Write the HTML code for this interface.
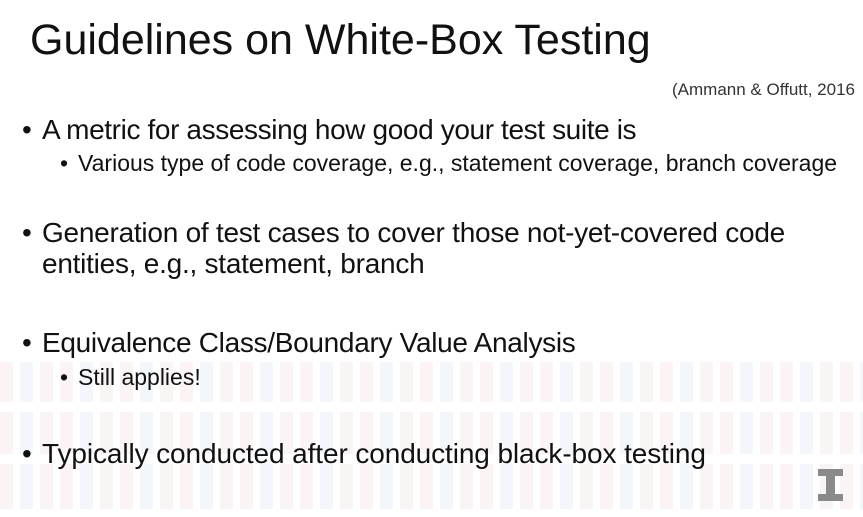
<!DOCTYPE html>
<html><head><style>
body{margin:0;width:863px;height:517px;overflow:hidden;background:#fff;font-family:"Liberation Sans",sans-serif;color:#111;position:relative}
.bg{position:absolute;left:0;width:863px;background:repeating-linear-gradient(90deg,#fcf4f4 0 13px,#fff 13px 20px,#f3f7fc 20px 33px,#fff 33px 40px,#faf5f5 40px 53px,#fff 53px 60px)}
.t{position:absolute;white-space:nowrap}
.L{font-size:28px}
.S{font-size:23px}
</style></head><body>
<div class="bg" style="top:362px;height:40px"></div>
<div class="bg" style="top:412px;height:42px"></div>
<div class="bg" style="top:464px;height:45px"></div>
<div class="t" style="left:30px;top:16px;font-size:43px">Guidelines on White-Box Testing</div>
<div class="t" style="left:672px;top:80px;font-size:17px;color:#333">(Ammann &amp; Offutt, 2016</div>
<div class="t L" style="left:22px;top:114px">•</div><div class="t L" style="left:42px;top:114px;letter-spacing:-0.38px">A metric for assessing how good your test suite is</div>
<div class="t S" style="left:60px;top:150px">•</div><div class="t S" style="left:78px;top:150px">Various type of code coverage, e.g., statement coverage, branch coverage</div>
<div class="t L" style="left:22px;top:217px">•</div><div class="t L" style="left:42px;top:217px;letter-spacing:-0.25px">Generation of test cases to cover those not-yet-covered code</div>
<div class="t L" style="left:42px;top:248px;letter-spacing:-0.25px">entities, e.g., statement, branch</div>
<div class="t L" style="left:22px;top:327px">•</div><div class="t L" style="left:42px;top:327px;letter-spacing:-0.3px">Equivalence Class/Boundary Value Analysis</div>
<div class="t S" style="left:60px;top:364px">•</div><div class="t S" style="left:78px;top:364px">Still applies!</div>
<div class="t L" style="left:22px;top:438px">•</div><div class="t L" style="left:42px;top:438px;letter-spacing:-0.1px">Typically conducted after conducting black-box testing</div>
<svg style="position:absolute;left:818px;top:469px" width="25" height="32"><path d="M0 0H25V7H17V25H25V32H0V25H8V7H0Z" fill="#8a8a8a"/></svg>
</body></html>
